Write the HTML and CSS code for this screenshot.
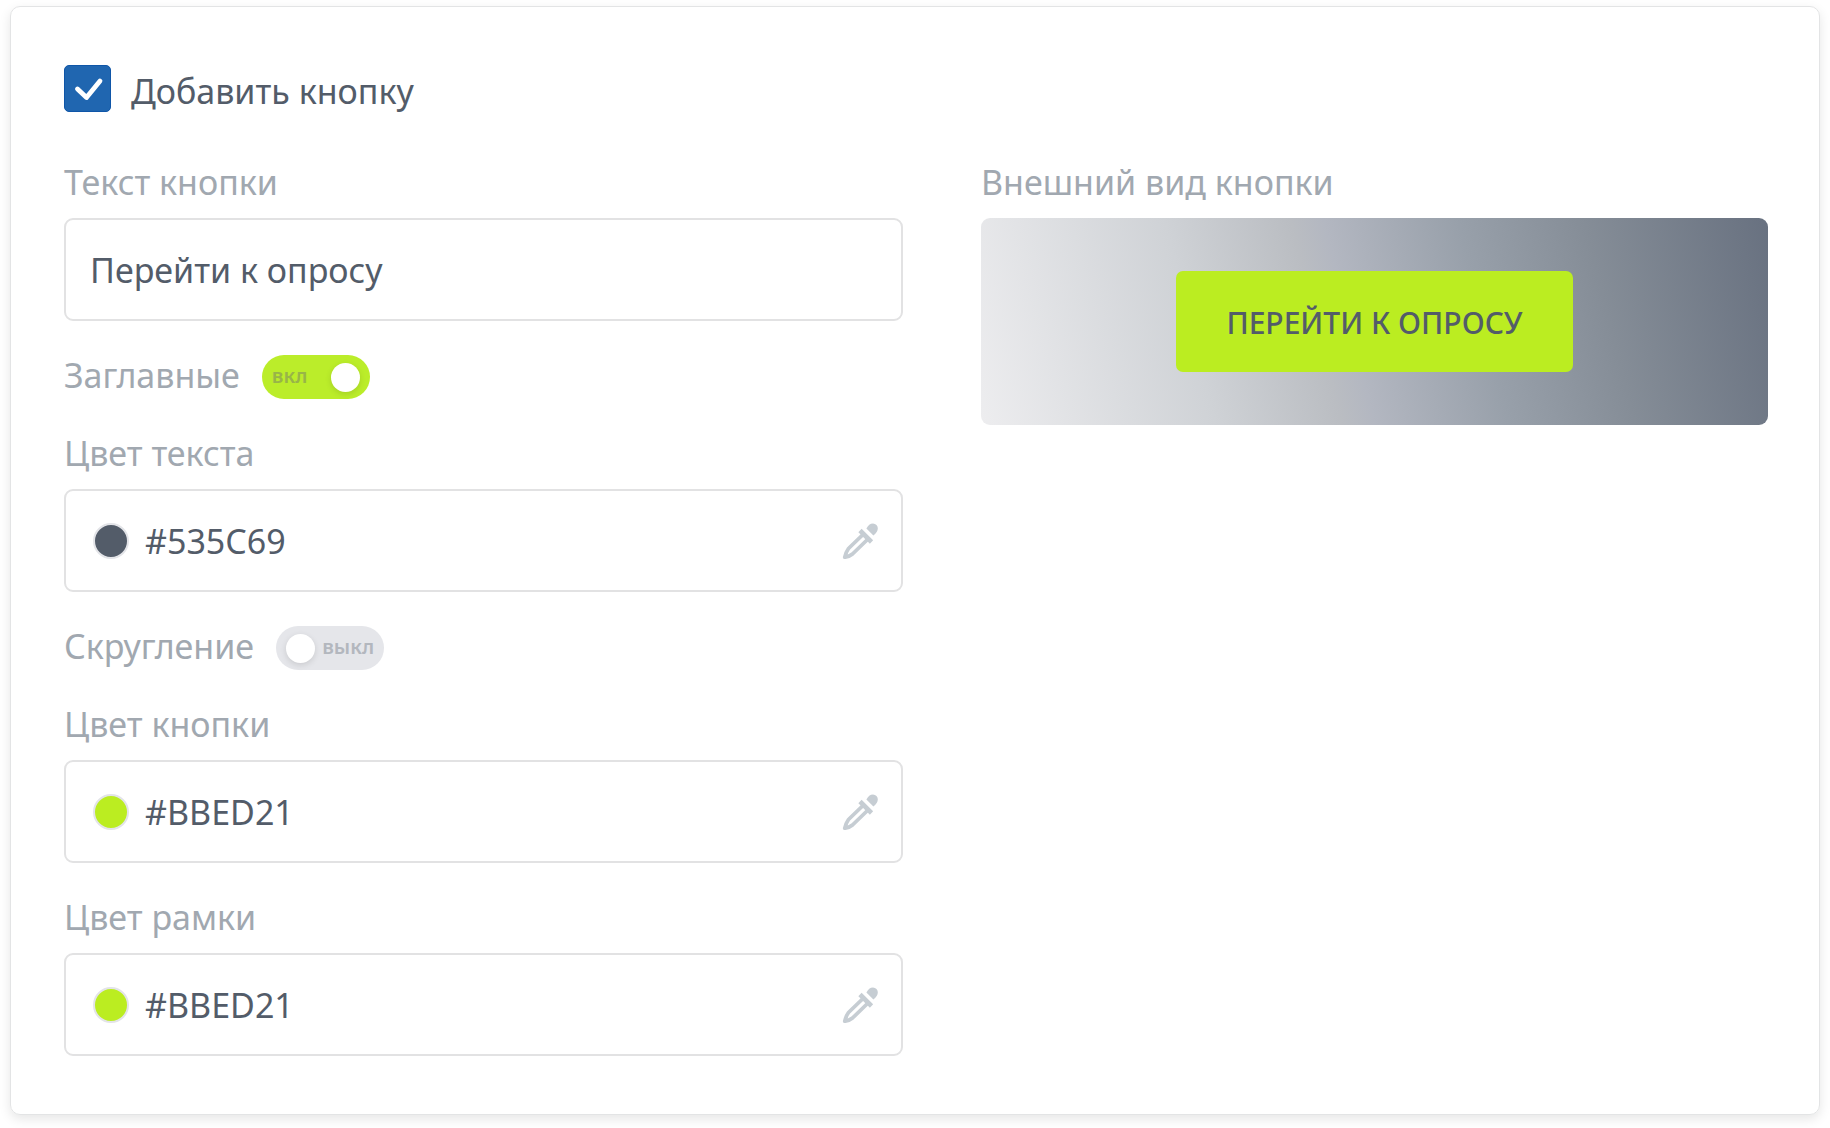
FILE: index.html
```html
<!DOCTYPE html>
<html lang="ru">
<head>
    <meta charset="UTF-8">
    <meta name="viewport" content="width=device-width, initial-scale=1.0">
    <title>Добавить кнопку</title>
    <link rel="stylesheet" href="styles.css">
</head>
<body>

    <!-- eyedropper, shared by all colour fields -->
    <svg class="sprite" aria-hidden="true">
        <symbol id="dropper" viewBox="0 0 36 36">
            <path d="M24.4 5.6 Q26.8 0.4 31 0.4 A5 5 0 0 1 35.8 5.6 Q35.8 9 31.4 12.6 Z" fill="currentColor"/>
            <path d="M18 7.5 L29.5 19" fill="none" stroke="currentColor" stroke-width="4.6"/>
            <path d="M20.5 12 L6.5 25.5 Q4 29 2.8 34.2 Q7.5 33.5 10.5 31 L25.5 16.5" fill="none" stroke="currentColor" stroke-width="3.8" stroke-linejoin="round"/>
        </symbol>
    </svg>

    <form class="card">
        <div class="card-header">
            <input class="checkbox" type="checkbox" id="add-button" checked>
            <label class="card-title" for="add-button">Добавить кнопку</label>
        </div>

        <div class="columns">
            <div class="settings">
                <div class="field">
                    <label class="label" for="button-text">Текст кнопки</label>
                    <div class="box">
                        <input class="input" type="text" id="button-text" value="Перейти к опросу">
                    </div>
                </div>

                <div class="switch-row">
                    <label class="label" for="uppercase">Заглавные</label>
                    <label class="switch">
                        <input class="switch-knob" type="checkbox" id="uppercase" checked>
                        <span class="switch-text">вкл</span>
                    </label>
                </div>

                <div class="field">
                    <label class="label" for="text-color">Цвет текста</label>
                    <div class="box">
                        <span class="swatch swatch-dark"></span>
                        <input class="input" type="text" id="text-color" value="#535C69">
                        <button class="picker" type="button" aria-label="Выбрать цвет текста"><svg class="picker-icon"><use href="#dropper"/></svg></button>
                    </div>
                </div>

                <div class="switch-row">
                    <label class="label" for="rounded">Скругление</label>
                    <label class="switch">
                        <input class="switch-knob" type="checkbox" id="rounded">
                        <span class="switch-text">выкл</span>
                    </label>
                </div>

                <div class="field">
                    <label class="label" for="button-color">Цвет кнопки</label>
                    <div class="box">
                        <span class="swatch swatch-lime"></span>
                        <input class="input" type="text" id="button-color" value="#BBED21">
                        <button class="picker" type="button" aria-label="Выбрать цвет кнопки"><svg class="picker-icon"><use href="#dropper"/></svg></button>
                    </div>
                </div>

                <div class="field">
                    <label class="label" for="border-color">Цвет рамки</label>
                    <div class="box">
                        <span class="swatch swatch-lime"></span>
                        <input class="input" type="text" id="border-color" value="#BBED21">
                        <button class="picker" type="button" aria-label="Выбрать цвет рамки"><svg class="picker-icon"><use href="#dropper"/></svg></button>
                    </div>
                </div>
            </div>

            <div class="field">
                <div class="label">Внешний вид кнопки</div>
                <div class="preview">
                    <button class="preview-button" type="button">Перейти к опросу</button>
                </div>
            </div>
        </div>
    </form>

</body>
</html>
```
FILE: styles.css
```css
* {
    margin: 0;
    padding: 0;
    box-sizing: border-box;
}

body {
    font-family: "Noto Sans", "Open Sans", sans-serif;
    font-size: 34px;
    line-height: 48px;
    background-color: #fff;
    color: #535c69;
    padding: 6px 10px 14px;
}

input, button {
    font: inherit;
    color: inherit;
    border: none;
    background: none;
}

.sprite {
    display: none;
}

.card {
    padding: 58px 51px 58px 53px;
    border: 1px solid #e3e4e5;
    border-radius: 10px;
    box-shadow: 0 4px 12px rgba(0, 0, 0, 0.1);
}

.card-header {
    display: flex;
    align-items: flex-start;
    gap: 20px;
    margin-bottom: 41px;
}

.card-title {
    line-height: 52px;
}

.checkbox {
    appearance: none;
    width: 47px;
    height: 47px;
    border: 1px solid #0f56a8;
    border-radius: 5px;
    background: #2066b0;
}

.checkbox:checked {
    background: #2066b0 url("data:image/svg+xml,%3Csvg xmlns='http://www.w3.org/2000/svg' viewBox='0 0 44 44'%3E%3Cpath d='M11.5 22 L20.5 30.5 L34 14' fill='none' stroke='white' stroke-width='4.8' stroke-linecap='round' stroke-linejoin='round'/%3E%3C/svg%3E") center / 44px 44px no-repeat;
}

.columns {
    display: grid;
    grid-template-columns: 839fr 787fr;
    gap: 78px;
    align-items: start;
}

.settings {
    display: flex;
    flex-direction: column;
    gap: 30px;
}

.field {
    display: flex;
    flex-direction: column;
    gap: 12px;
}

.label {
    color: #a1a8b0;
}

.box {
    display: flex;
    align-items: center;
    height: 103px;
    padding: 0 23px 0 24px;
    border: 2px solid #e2e2e3;
    border-radius: 9px;
}

.input {
    flex: 1;
    min-width: 0;
    height: 48px;
    outline: none;
}

.swatch {
    width: 36px;
    height: 36px;
    margin: 0 16px 0 3px;
    border: 2px solid #e3e4e8;
    border-radius: 50%;
}

.swatch-dark {
    background: #535c69;
}

.swatch-lime {
    background: #bbed21;
}

.picker {
    width: 36px;
    height: 36px;
    color: #c6cdd3;
    cursor: pointer;
}

.picker-icon {
    display: block;
    width: 36px;
    height: 36px;
}

.switch-row {
    display: flex;
    align-items: flex-end;
    gap: 22px;
}

.switch {
    display: flex;
    align-items: center;
    justify-content: space-between;
    width: 108px;
    height: 44px;
    padding: 0 10px;
    border-radius: 22px;
    background: #e5e6ea;
    color: #b3b7be;
    font-size: 20px;
    font-weight: 600;
    line-height: 44px;
    cursor: pointer;
}

.switch-text {
    padding-bottom: 2px;
}

.switch-knob {
    appearance: none;
    width: 29px;
    height: 29px;
    border-radius: 50%;
    background: #fff;
    box-shadow: 0 2px 6px rgba(0, 0, 0, 0.12);
}

.switch:has(:checked) {
    flex-direction: row-reverse;
    background: #bbed2a;
    color: #98b548;
}

.preview {
    display: flex;
    align-items: center;
    justify-content: center;
    height: 207px;
    border-radius: 9px;
    background: linear-gradient(76deg, #ededef 0%, #cfd2d6 28%, #babdc2 43%, #b3b7c1 47%, #98a0aa 63%, #858d97 78%, #687180 100%);
}

.preview-button {
    height: 101px;
    padding: 3px 50px 0;
    border-radius: 7px;
    background: #bbed21;
    font-size: 30px;
    font-weight: 500;
    text-transform: uppercase;
    cursor: pointer;
}
```
